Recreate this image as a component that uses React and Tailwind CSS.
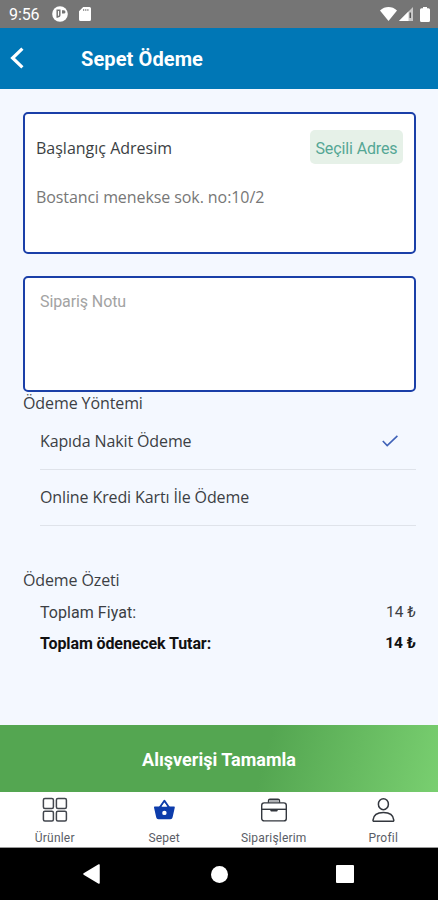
import { useState } from "react";

// ──────────────────────────────────────────────────────────────
function StatusBar() {
  return (
    <div className="h-7 shrink-0 bg-[#757575] flex items-center justify-between pl-[9px] pr-2 text-white">
      <div className="flex items-center">
        <span className="w-[43px] pt-px text-[16px] leading-none tracking-[-0.1px]">9:56</span>
        <svg className="w-4 h-4" viewBox="0 0 16 16">
          <circle cx="8" cy="8" r="7.8" fill="#fff" />
          <path d="M5.2 3.6v8.2M5.2 4.2h2.6v4.6a2 2 0 0 1-2 2" fill="none" stroke="#757575" strokeWidth="1.5" />
          <path d="M10 4.2h1.8a1.7 1.7 0 0 1 0 3.4H10z" fill="#757575" />
        </svg>
        <svg className="w-3 h-[14px] ml-[11px]" viewBox="0 0 12 14">
          <path d="M4.2 0H10.5a1.5 1.5 0 0 1 1.5 1.5v11a1.5 1.5 0 0 1-1.5 1.5h-9A1.5 1.5 0 0 1 0 12.5V4.2z" fill="#fff" />
          <path d="M4.7 2v2M6.8 2v2M8.9 2v2" stroke="#757575" strokeWidth="0.9" />
        </svg>
      </div>
      <div className="flex items-center">
        <svg className="w-[17px] h-[14px]" viewBox="0 0 17 14">
          <path d="M0 3.4C5 -1.1 12 -1.1 17 3.4L8.5 14z" fill="#fff" />
        </svg>
        <svg className="w-[14px] h-[14px] ml-[2px]" viewBox="0 0 14 14">
          <path d="M14 0v14H0z" fill="#fff" fillOpacity="0.6" />
          <path d="M9.5 4.5V14H0z" fill="#fff" />
          <path d="M11.3 5.5v5.5" stroke="#555" strokeWidth="1.5" />
        </svg>
        <svg className="w-[10px] h-[15px] ml-[7px]" viewBox="0 0 10 15">
          <path d="M3 0h4v1.2h1.5A1.5 1.5 0 0 1 10 2.7v10.8a1.5 1.5 0 0 1-1.5 1.5h-7A1.5 1.5 0 0 1 0 13.5V2.7a1.5 1.5 0 0 1 1.5-1.5H3z" fill="#fff" />
        </svg>
      </div>
    </div>
  );
}

function GridIcon() {
  return (
    <svg className="w-[26px] h-[26px]" viewBox="0 0 26 26" fill="none" stroke="#42464d" strokeWidth="1.5">
      <rect x="1.4" y="1.6" width="10" height="9.8" rx="1.5" />
      <rect x="14.4" y="1.6" width="10" height="9.8" rx="1.5" />
      <rect x="1.4" y="14.2" width="10" height="9.8" rx="1.5" />
      <rect x="14.4" y="14.2" width="10" height="9.8" rx="1.5" />
    </svg>
  );
}

function BasketIcon() {
  return (
    <svg className="w-[26px] h-[26px]" viewBox="0 0 26 26">
      <path d="M8.4 11L13.4 3.8l5 7.2" fill="none" stroke="#0d3cab" strokeWidth="2" strokeLinejoin="round" />
      <path d="M4 9.4h18.800c.7 0 1.100.5 1 1.200l-2.200 9.700c-.3 1.300-1 1.900-2.300 1.900H7.500c-1.300 0-2-.6-2.300-1.900L3 10.600c-.1-.7.300-1.200 1-1.200z" fill="#0d3cab" />
      <path d="M10.8 9.5l2.6-3.700 2.600 3.700z" fill="#fff" />
      <circle cx="13.4" cy="15.9" r="2.2" fill="#fff" />
    </svg>
  );
}

function BriefcaseIcon() {
  return (
    <svg className="w-[28px] h-[26px]" viewBox="0 0 28 26" fill="none" stroke="#33373e" strokeWidth="1.4">
      <rect x="1.7" y="5.9" width="24.6" height="18" rx="2.5" />
      <path d="M8.5 5.7V3.7c0-.9.6-1.5 1.5-1.5h8c.9 0 1.5.6 1.5 1.5v2" />
      <path d="M9.5 4h9" strokeWidth="1.4" stroke="#8a8d92" />
      <path d="M2 12.3h24" />
      <path d="M10 12.5c.3 1.7 1 2 1.8 2h4.4c.8 0 1.5-.3 1.8-2z" fill="#33373e" stroke="none" />
    </svg>
  );
}

function PersonIcon() {
  return (
    <svg className="w-[26px] h-[26px]" viewBox="0 0 26 26" fill="none" stroke="#33373e" strokeWidth="1.5">
      <ellipse cx="13.4" cy="7.2" rx="5" ry="5.5" />
      <path d="M4 24.2C3.3 24.2 2.9 23.8 3 23.1 3.5 18.2 7.5 15.6 13.4 15.6s9.9 2.6 10.4 7.5c.1.7-.3 1.1-1 1.1z" />
    </svg>
  );
}

const paymentMethods = [
  { id: "cash", label: "Kapıda Nakit Ödeme" },
  { id: "card", label: "Online Kredi Kartı İle Ödeme" },
];

const tabs = [
  { id: "products", label: "Ürünler", Icon: GridIcon },
  { id: "cart", label: "Sepet", Icon: BasketIcon },
  { id: "orders", label: "Siparişlerim", Icon: BriefcaseIcon },
  { id: "profile", label: "Profil", Icon: PersonIcon },
];

// ──────────────────────────────────────────────────────────────
export default function App() {
  const [method, setMethod] = useState("cash");
  const [note, setNote] = useState("");

  return (
    <div className="w-full h-screen flex flex-col overflow-hidden bg-[#f4f8ff] font-[Roboto,sans-serif]">
      <StatusBar />

      <header className="h-[61px] shrink-0 bg-[#0077b6] flex items-center pl-[10px] text-white">
        <button className="w-[71px] pb-[2px]" aria-label="Geri">
          <svg className="w-[14px] h-[22px]" viewBox="0 0 14 22" fill="none" stroke="#fff" strokeWidth="3.2">
            <path d="M12.4 1.6L2.6 11l9.8 9.4" />
          </svg>
        </button>
        <h1 className="pt-px text-[20px] leading-none font-bold tracking-[0.1px]">Sepet Ödeme</h1>
      </header>

      <main className="flex-1 min-h-0 pl-[23px] pr-[22px] pt-[23px] text-[#3c3f44]">
        {/* Address */}
        <section className="h-[142px] rounded-[5px] border-2 border-[#1a3fa8] bg-white pl-[11px] pr-[11px] pt-4">
          <div className="flex items-center justify-between">
            <h2 className="pt-px text-[16px] font-['Open_Sans',sans-serif]">Başlangıç Adresim</h2>
            <span className="w-[93px] h-[34px] pt-[3px] rounded-[5px] bg-[#e6f1e8] flex items-center justify-center text-[16px] tracking-[-0.12px] text-[#55a795]">
              Seçili Adres
            </span>
          </div>
          <p className="mt-[21px] text-[16px] leading-6 tracking-[-0.08px] text-[#777] font-['Open_Sans',sans-serif]">
            Bostanci menekse sok. no:10/2
          </p>
        </section>

        {/* Order note */}
        <textarea
          value={note}
          onChange={(e) => setNote(e.target.value)}
          placeholder="Sipariş Notu"
          className="block w-full h-[116px] mt-[22px] rounded-[5px] border-2 border-[#1a3fa8] bg-white px-[15px] py-3 text-[16px] tracking-[-0.1px] resize-none outline-none placeholder:text-[#a3a3a3]"
        />

        {/* Payment method */}
        <h2 className="h-[22px] text-[16px] leading-[22px] tracking-[-0.1px] font-['Open_Sans',sans-serif]">Ödeme Yöntemi</h2>
        <div className="pl-[17px]">
          {paymentMethods.map((item) => (
            <button
              key={item.id}
              onClick={() => setMethod(item.id)}
              className="w-full h-14 pb-[2px] border-b border-[#dfe3ea] flex items-center justify-between pr-[18px] text-left text-[16px] tracking-[-0.12px] font-['Open_Sans',sans-serif]"
            >
              <span>{item.label}</span>
              {method === item.id && (
                <svg className="w-4 h-3" viewBox="0 0 16 12" fill="none" stroke="#3f62b8" strokeWidth="1.6">
                  <path d="M.8 6l4.4 4.6L15.4.8" />
                </svg>
              )}
            </button>
          ))}
        </div>

        {/* Summary */}
        <h2 className="mt-[42px] text-[16px] leading-6 tracking-[-0.12px] font-['Open_Sans',sans-serif]">Ödeme Özeti</h2>
        <div className="pl-[17px] text-[16px]">
          <div className="h-[31px] mt-[5px] flex items-center justify-between">
            <span className="tracking-[0.05px]">Toplam Fiyat:</span>
            <span className="text-[15.5px]">14 ₺</span>
          </div>
          <div className="h-[31px] flex items-center justify-between font-bold text-[#111]">
            <span className="tracking-[-0.1px]">Toplam ödenecek Tutar:</span>
            <span className="text-[15.5px]">14 ₺</span>
          </div>
        </div>
      </main>

      <button className="h-[67px] pt-[2px] shrink-0 bg-[linear-gradient(105deg,#54a651_0%,#54a651_60%,#79cf70_100%)] text-white text-[18px] font-bold">
        Alışverişi Tamamla
      </button>

      <nav className="h-14 shrink-0 bg-white border-b border-[#999] flex">
        {tabs.map(({ id, label, Icon }) => (
          <button key={id} className="flex-1 flex flex-col items-center pt-[5px] text-[#5a5d66]">
            <Icon />
            <span className="mt-2 text-[12px] leading-[14px] tracking-[0.2px]">{label}</span>
          </button>
        ))}
      </nav>

      {/* System navigation */}
      <div className="h-[52px] shrink-0 bg-black flex items-center pl-[83px]">
        <svg className="w-[17px] h-[20px]" viewBox="0 0 17 20">
          <path d="M16 1v18L1 10z" fill="#fff" stroke="#fff" strokeWidth="1.5" strokeLinejoin="round" />
        </svg>
        <div className="w-[17px] h-[17px] ml-[111px] rounded-full bg-white" />
        <div className="w-[18px] h-[18px] ml-[108px] rounded-[1px] bg-white" />
      </div>
    </div>
  );
}
